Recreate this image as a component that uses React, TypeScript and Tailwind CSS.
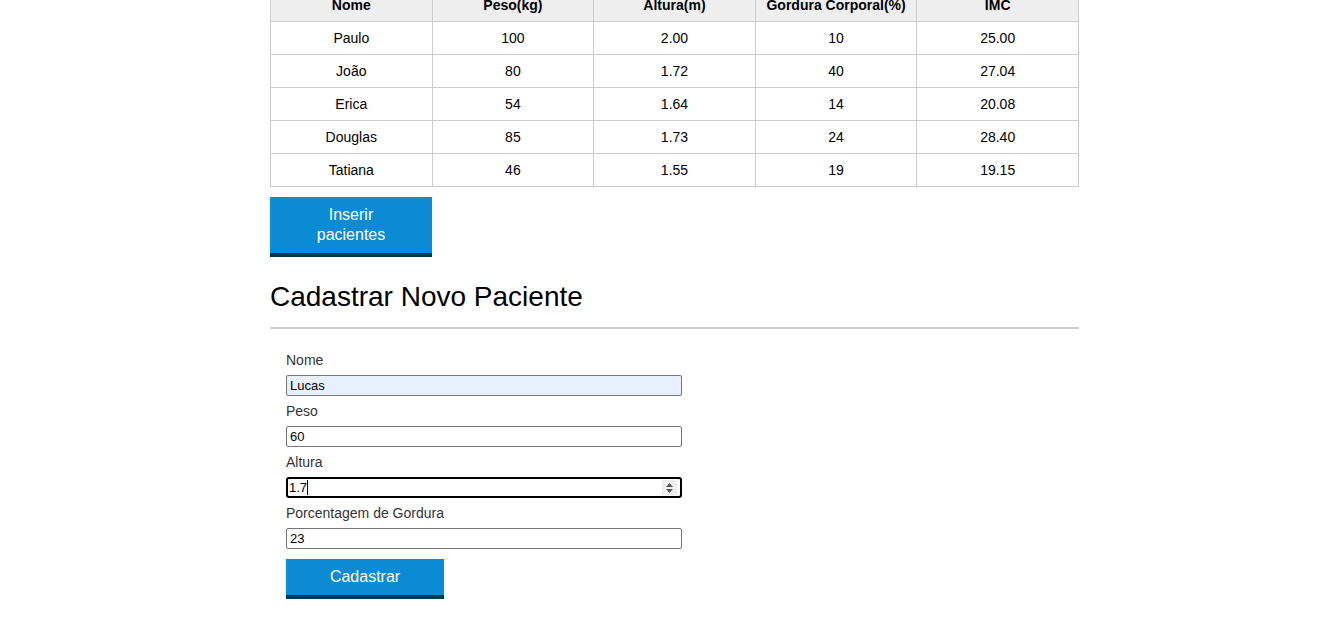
import React from 'react';

const patients = [
  { nome: 'Paulo', peso: '100', altura: '2.00', gordura: '10', imc: '25.00' },
  { nome: 'João', peso: '80', altura: '1.72', gordura: '40', imc: '27.04' },
  { nome: 'Erica', peso: '54', altura: '1.64', gordura: '14', imc: '20.08' },
  { nome: 'Douglas', peso: '85', altura: '1.73', gordura: '24', imc: '28.40' },
  { nome: 'Tatiana', peso: '46', altura: '1.55', gordura: '19', imc: '19.15' },
];

const headers = ['Nome', 'Peso(kg)', 'Altura(m)', 'Gordura Corporal(%)', 'IMC'];

const Field: React.FC<{ label: string; value: string; autofill?: boolean }> = ({ label, value, autofill }) => (
  <div className="flex flex-col">
    <label className="text-[14px] leading-[16px] text-[#333] mb-[7px]">{label}</label>
    <input
      readOnly
      value={value}
      className={`w-[396px] h-[21px] border border-[#767676] rounded-[2px] px-[3px] text-[13px] text-black outline-none ${autofill ? 'bg-[#e8f0fe]' : 'bg-white'}`}
    />
  </div>
);

export default function App() {
  return (
    <div className="min-h-[624px] bg-white font-['Liberation_Sans',Arial,sans-serif] overflow-hidden">
      <div className="ml-[270px] w-[809px]">
        <table className="w-full -mt-[12px] border-collapse table-fixed text-[14px] text-black">
          <thead>
            <tr className="h-[33px] bg-[#eee]">
              {headers.map((h) => (
                <th key={h} className="border border-[#ccc] font-bold text-center">{h}</th>
              ))}
            </tr>
          </thead>
          <tbody>
            {patients.map((p) => (
              <tr key={p.nome} className="h-[33px]">
                <td className="border border-[#ccc] text-center">{p.nome}</td>
                <td className="border border-[#ccc] text-center">{p.peso}</td>
                <td className="border border-[#ccc] text-center">{p.altura}</td>
                <td className="border border-[#ccc] text-center">{p.gordura}</td>
                <td className="border border-[#ccc] text-center">{p.imc}</td>
              </tr>
            ))}
          </tbody>
        </table>

        <button className="mt-[10px] w-[162px] h-[60px] bg-[#0b8bd3] border-b-[4px] border-[#063650] text-white text-[16px] leading-[20px] px-[40px]">
          Inserir pacientes
        </button>

        <h2 className="mt-[24px] text-[28px] leading-[32px] text-black">Cadastrar Novo Paciente</h2>
        <hr className="mt-[14px] border-0 h-[2px] bg-[#ccc]" />

        <form className="pl-[16px] pt-[23px] flex flex-col gap-[7px]">
          <Field label="Nome" value="Lucas" autofill />
          <Field label="Peso" value="60" />
          <div className="flex flex-col">
            <label className="text-[14px] leading-[16px] text-[#333] mb-[7px]">Altura</label>
            <div className="relative w-[396px] h-[21px] border-2 border-black rounded-[3px] flex items-center px-[1px] text-[13px] text-black">
              <span>1.7</span>
              <span className="w-px h-[15px] bg-black" />
              <span className="absolute right-[3px] top-[1px] w-[15px] h-[15px] bg-[#eee] flex flex-col items-center justify-center gap-[2px]">
                <svg width="7" height="4" viewBox="0 0 7 4"><path d="M0 4 L3.5 0 L7 4 Z" fill="#555" /></svg>
                <svg width="7" height="4" viewBox="0 0 7 4"><path d="M0 0 L3.5 4 L7 0 Z" fill="#555" /></svg>
              </span>
            </div>
          </div>
          <Field label="Porcentagem de Gordura" value="23" />
          <button type="button" className="mt-[3px] w-[158px] h-[40px] bg-[#0b8bd3] border-b-[4px] border-[#063650] text-white text-[16px]">
            Cadastrar
          </button>
        </form>
      </div>
    </div>
  );
}
